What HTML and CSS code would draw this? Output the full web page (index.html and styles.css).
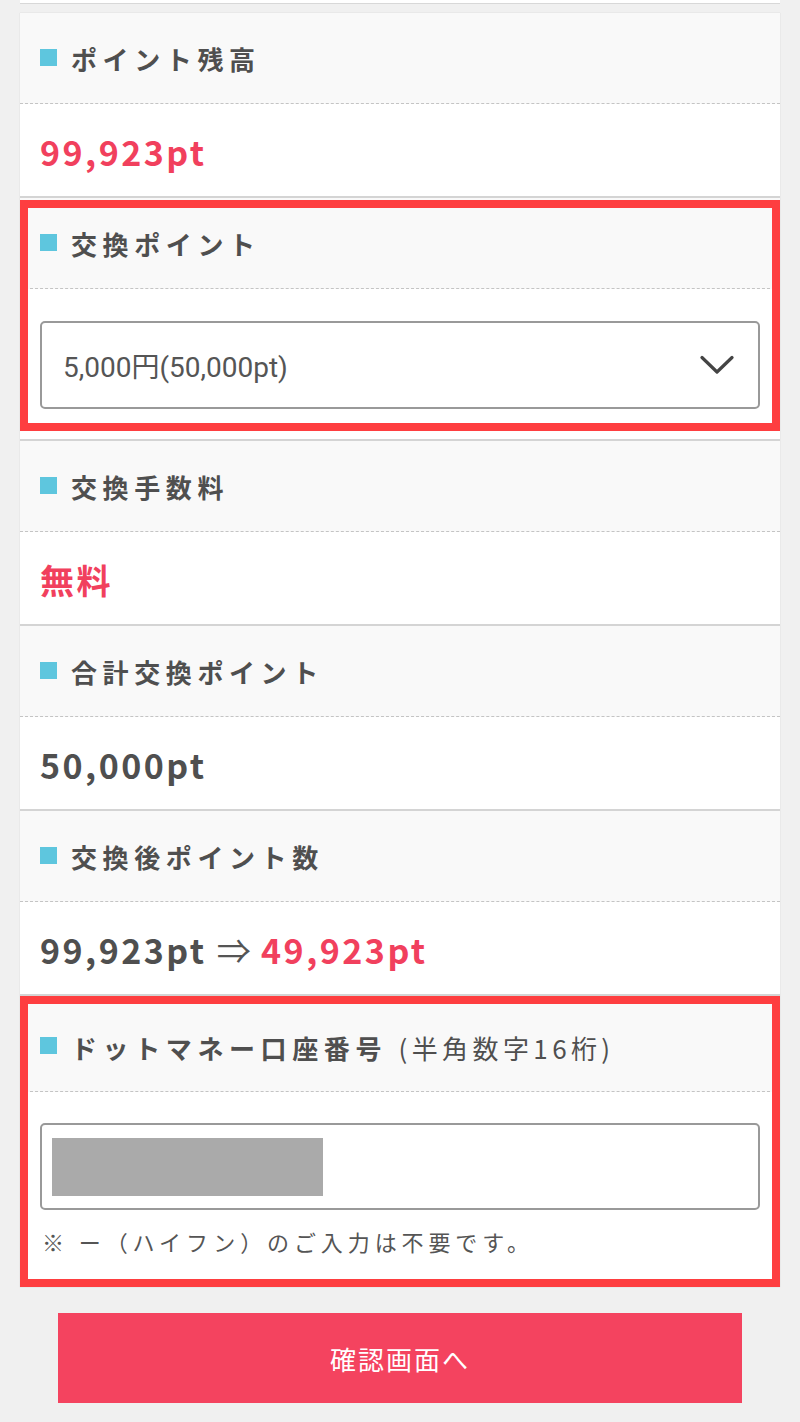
FILE: index.html
```html
<!DOCTYPE html>
<html lang="ja">
<head>
<meta charset="utf-8">
<title>ポイント交換</title>
<link rel="stylesheet" href="styles.css">
</head>
<body>
<div class="page">
  <div class="prev"></div>
  <div class="card">
    <section class="row">
      <div class="row-head"><span class="mark"></span><h2 class="title">ポイント残高</h2></div>
      <div class="row-body"><p class="val red">99,923pt</p></div>
    </section>

    <section class="row boxed boxed-a">
      <div class="row-head"><span class="mark"></span><h2 class="title">交換ポイント</h2></div>
      <div class="row-body row-body-form">
        <div class="select">
          <span class="select-text">5,000円(50,000pt)</span>
          <svg class="chev" width="34" height="20" viewBox="0 0 34 20"><polyline points="2,2.5 17,17 32,2.5" fill="none" stroke="#444" stroke-width="3.2" stroke-linecap="round" stroke-linejoin="round"/></svg>
        </div>
      </div>
    </section>

    <section class="row">
      <div class="row-head"><span class="mark"></span><h2 class="title">交換手数料</h2></div>
      <div class="row-body"><p class="val red">無料</p></div>
    </section>

    <section class="row">
      <div class="row-head"><span class="mark"></span><h2 class="title">合計交換ポイント</h2></div>
      <div class="row-body"><p class="val">50,000pt</p></div>
    </section>

    <section class="row">
      <div class="row-head"><span class="mark"></span><h2 class="title">交換後ポイント数</h2></div>
      <div class="row-body"><p class="val">99,923pt <span class="arrow">⇒</span> <span class="red">49,923pt</span></p></div>
    </section>

    <section class="row boxed boxed-b">
      <div class="row-head row-head-tall"><span class="mark"></span><h2 class="title">ドットマネー口座番号 <span class="sub">(半角数字16桁)</span></h2></div>
      <div class="row-body row-body-account">
        <div class="input"><span class="redact"></span></div>
        <p class="note">※ ー（ハイフン）のご入力は不要です。</p>
      </div>
    </section>
  </div>
  <button class="submit" type="button">確認画面へ</button>
</div>
</body>
</html>
```

FILE: styles.css
```css
* { box-sizing: border-box; }
html, body { margin: 0; padding: 0; }
body {
  background: #f0f0f0;
  font-family: "Noto Sans CJK JP", "Noto Sans", sans-serif;
  color: #4f4f4f;
}
.page {
  padding: 0 20px 19px;
}
.prev {
  height: 4px;
  background: #fff;
  border-bottom: 1px solid #d8d8d8;
  margin-bottom: 9px;
}
.card {
  background: #fff;
  box-shadow: 0 0 1px rgba(0,0,0,0.18);
}
.row { position: relative; }
.row-head {
  height: 91px;
  display: flex;
  align-items: center;
  padding: 2px 20px 0;
  background: #f9f9f9;
  border-bottom: 1px dashed #c4c4c4;
}
.row-head-tall { height: 96px; padding-top: 8px; }
.mark {
  width: 17px;
  height: 17px;
  background: #5ec6de;
  flex: none;
  margin-right: 14px;
  margin-top: -4px;
}
.title {
  margin: 0;
  font-size: 26px;
  font-weight: 700;
  letter-spacing: 5.6px;
  color: #4f4f4f;
  line-height: 1.2;
}
.sub {
  font-weight: 400;
  letter-spacing: 4.4px;
}
.row-body {
  height: 94px;
  display: flex;
  align-items: center;
  padding: 4px 20px 0;
  border-bottom: 2px solid #d4d4d4;
}
.val {
  margin: 0;
  font-size: 34px;
  font-weight: 700;
  letter-spacing: 2.5px;
  color: #4f4f4f;
  line-height: 1.2;
}
.red { color: #f1405d; }
.arrow { font-weight: 400; letter-spacing: 0; color: #555; }
.row-body-form {
  height: auto;
  padding: 32px 20px 30px;
}
.select {
  width: 100%;
  height: 88px;
  border: 2px solid #999;
  border-radius: 5px;
  background: #fff;
  display: flex;
  align-items: center;
  justify-content: space-between;
  padding: 0 24px 0 21px;
}
.select-text {
  font-family: Roboto, "Noto Sans CJK JP", sans-serif;
  font-size: 28px;
  color: #555;
}
.chev { display: block; }
.row-body-account {
  height: auto;
  display: block;
  padding: 31px 20px 31px;
  border-bottom: none;
}
.input {
  height: 87px;
  border: 2px solid #999;
  border-radius: 5px;
  display: flex;
  align-items: center;
  padding: 0 10px;
}
.redact {
  width: 271px;
  height: 58px;
  background: #aaaaaa;
}
.note {
  margin: 16px 0 0 2px;
  font-size: 22px;
  line-height: 30px;
  letter-spacing: 4.9px;
  color: #555;
}
.boxed::after {
  content: "";
  position: absolute;
  left: 0;
  right: 0;
  border: 8px solid #fe3e40;
  pointer-events: none;
}
.boxed-a::after { top: 2px; bottom: 10px; }
.boxed-b::after { top: 0; bottom: 0; }
.submit {
  display: block;
  width: 684px;
  height: 90px;
  margin: 26px auto 0;
  border: none;
  background: #f4435f;
  color: #fff;
  font-family: "Noto Sans CJK JP", sans-serif;
  font-size: 26px;
  letter-spacing: 2px;
  padding: 0;
}
```
